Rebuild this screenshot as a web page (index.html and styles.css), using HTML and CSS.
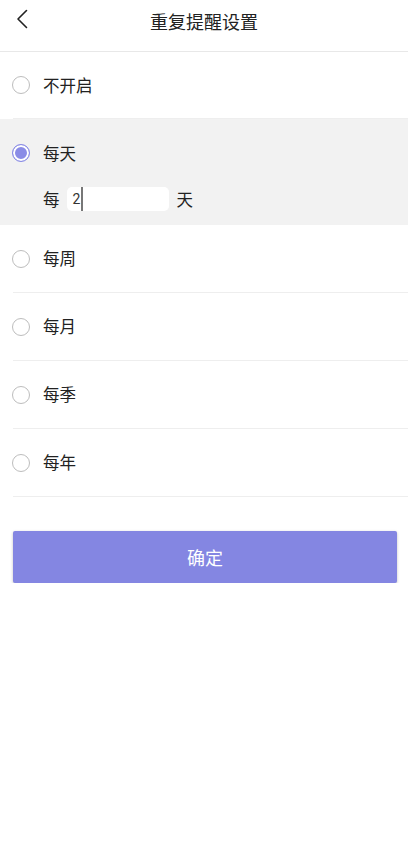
FILE: index.html
```html
<!DOCTYPE html>
<html lang="zh-CN">
<head>
    <meta charset="UTF-8">
    <meta name="viewport" content="width=device-width, initial-scale=1.0">
    <title>重复提醒设置</title>
    <link rel="stylesheet" href="styles.css">
</head>
<body>
    <div class="header">
        <span class="back">
            <svg width="12" height="20" viewBox="0 0 12 20"><path d="M10.5 1.5 L2 10 L10.5 18.5" fill="none" stroke="#222" stroke-width="1.6" stroke-linecap="round" stroke-linejoin="round"/></svg>
        </span>
        <h1 class="title">重复提醒设置</h1>
    </div>
    <div class="list">
        <div class="item first">
            <div class="row"><span class="radio"></span><span class="label">不开启</span></div>
        </div>
        <div class="item active">
            <div class="row"><span class="radio checked"></span><span class="label">每天</span></div>
            <div class="every">
                <span>每</span>
                <span class="num">2<i class="caret"></i></span>
                <span>天</span>
            </div>
        </div>
        <div class="item">
            <div class="row"><span class="radio"></span><span class="label">每周</span></div>
        </div>
        <div class="item">
            <div class="row"><span class="radio"></span><span class="label">每月</span></div>
        </div>
        <div class="item">
            <div class="row"><span class="radio"></span><span class="label">每季</span></div>
        </div>
        <div class="item">
            <div class="row"><span class="radio"></span><span class="label">每年</span></div>
        </div>
    </div>
    <button class="btn-ok">确定</button>
</body>
</html>
```

FILE: styles.css
```css
body{
    margin: 0;
    background: #fff;
    font-family: "Noto Sans CJK SC", "Noto Sans", sans-serif;
    color: #222;
}
.header{
    position: relative;
    height: 51px;
    border-bottom: 1px solid #e8e8e8;
    display: flex;
    align-items: center;
    justify-content: center;
}
.back{
    position: absolute;
    left: 16px;
    top: 9px;
}
.title{
    margin: 0;
    font-size: 18px;
    font-weight: normal;
    line-height: 1;
    margin-top: -9px;
}
.item{
    border-bottom: 1px solid #eeeeee;
    margin-left: 13px;
}
.item.active{
    margin-left: 0;
    padding-left: 13px;
    background: #f2f2f2;
    border-bottom: none;
    padding-bottom: 14px;
}
.row{
    height: 67px;
    display: flex;
    align-items: center;
}
.first .row{
    height: 66px;
}
.active .row{
    height: 68px;
}
.radio{
    width: 16px;
    height: 16px;
    border: 1px solid #bdbdbd;
    border-radius: 50%;
    box-sizing: content-box;
    margin-left: -1px;
    margin-right: 13px;
}
.radio.checked{
    border-color: #8a8ce6;
    background: #8a8ce6;
    box-shadow: inset 0 0 0 2px #fff;
}
.label{
    font-size: 16.5px;
    line-height: 1;
}
.every{
    display: flex;
    align-items: center;
    font-size: 16.5px;
    height: 24px;
    margin-left: 30px;
}
.num{
    display: flex;
    align-items: center;
    width: 96px;
    height: 24px;
    background: #fff;
    border-radius: 5px;
    margin: 0 8px 0 7px;
    padding-left: 6px;
    font-family: "Roboto", sans-serif;
    font-size: 14px;
    color: #333;
}
.caret{
    display: inline-block;
    width: 2px;
    height: 24px;
    background: #777;
    margin-left: 1px;
}
.btn-ok{
    display: block;
    width: 384px;
    height: 52px;
    margin: 34px 0 0 13px;
    border: none;
    border-radius: 2px;
    background: #8486e2;
    color: #fff;
    font-family: "Noto Sans CJK SC", sans-serif;
    font-size: 18px;
    box-shadow: 0 1px 3px rgba(0,0,0,0.25);
}
```
